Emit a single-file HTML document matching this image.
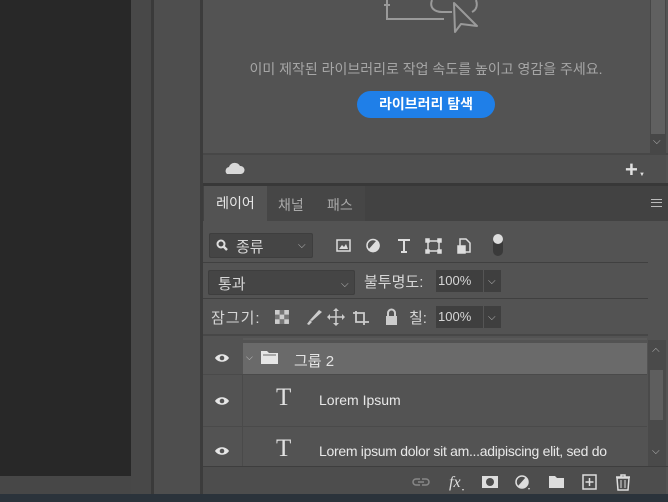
<!DOCTYPE html>
<html><head><meta charset="utf-8"><style>
*{margin:0;padding:0;box-sizing:border-box}
body{width:668px;height:502px;overflow:hidden;background:#535353;position:relative;font-family:"Liberation Sans","Noto Sans CJK KR",sans-serif;color:#d6d6d6}
.a{position:absolute}
.t{font-size:13px;white-space:nowrap}
.inp{background:#454545;border:1px solid #3e3e3e;border-radius:2px}
.dd{font-size:10px;color:#bbb}
</style></head><body>
<div class="a" style="left:0;top:0;width:131px;height:476px;background:#282828"></div>
<div class="a" style="left:0;top:476px;width:131px;height:18px;background:#474747"></div>
<div class="a" style="left:131px;top:0;width:20px;height:494px;background:#484848"></div>
<div class="a" style="left:151px;top:0;width:3px;height:494px;background:#3a3a3a"></div>
<div class="a" style="left:154px;top:0;width:46px;height:494px;background:#4e4e4e"></div>
<div class="a" style="left:200px;top:0;width:3px;height:494px;background:#3c3c3c"></div>
<div class="a" style="left:0;top:494px;width:668px;height:8px;background:#2b333b"></div>

<!-- library area -->
<div class="a" style="left:203px;top:0;width:465px;height:153px;background:#535353"></div>
<svg class="a" style="left:380px;top:0" width="102" height="34" viewBox="0 0 102 34" fill="none" stroke="#9a9a9a" stroke-width="2">
<path d="M7 0V4M4 5H10M7 5V19H64"/><path d="M52 0C49 8 55 12 62 12H72"/><path d="M96 0C98 6 96 10 92 12"/>
<path d="M74 3L75 32L81 24L97 26Z" stroke-linejoin="round"/></svg>
<div class="a t" style="left:203px;top:59px;width:446px;text-align:center;color:#a6a6a6;font-size:14px">이미 제작된 라이브러리로 작업 속도를 높이고 영감을 주세요.</div>
<div class="a" style="left:357px;top:91px;width:138px;height:27px;background:#1f7fe8;border-radius:14px;color:#fff;font-weight:bold;font-size:14px;text-align:center;line-height:27px">라이브러리 탐색</div>
<div class="a" style="left:650px;top:0;width:16px;height:153px;background:#474747"></div>
<div class="a" style="left:651px;top:0;width:14px;height:134px;background:#606060"></div>
<div class="a dd" style="left:653px;top:136px">⌵</div>
<div class="a" style="left:203px;top:153px;width:465px;height:2px;background:#474747"></div>
<div class="a" style="left:203px;top:155px;width:463px;height:28px;background:#4f4f4f"></div>
<svg class="a" style="left:223px;top:161px" width="22" height="14"><path d="M4 13H18A4 4 0 0 0 17 5A6 6 0 0 0 6 6A4 4 0 0 0 4 13Z" fill="#d8d8d8"/></svg>
<div class="a" style="left:625px;top:162px;font-size:22px;line-height:16px;color:#e0e0e0;font-weight:bold">+</div>
<div class="a" style="left:639px;top:172px;font-size:6px;color:#ddd">▼</div>
<div class="a" style="left:203px;top:183px;width:465px;height:3px;background:#383838"></div>

<!-- tabs -->
<div class="a" style="left:203px;top:186px;width:465px;height:35px;background:#424242"></div>
<div class="a t" style="left:204px;top:186px;width:63px;height:35px;background:#535353;line-height:35px;text-align:center;font-size:14px;color:#e8e8e8">레이어</div>
<div class="a t" style="left:267px;top:186px;width:98px;height:35px;background:#464646"></div>
<div class="a t" style="left:278px;top:195px;font-size:14px;color:#aaa">채널</div>
<div class="a t" style="left:327px;top:195px;font-size:14px;color:#aaa">패스</div>
<div class="a" style="left:651px;top:199px;width:11px;height:8px;border-top:1px solid #bbb;border-bottom:1px solid #bbb"><div style="margin-top:2px;border-top:1px solid #bbb"></div></div>

<!-- filter row -->
<div class="a inp" style="left:209px;top:233px;width:104px;height:25px"></div>
<svg class="a" style="left:216px;top:239px" width="12" height="13"><circle cx="5" cy="5" r="3.5" stroke="#ddd" stroke-width="2" fill="none"/><path d="M7.5 7.5L11 11" stroke="#ddd" stroke-width="2.5"/></svg>
<div class="a t" style="left:236px;top:236px;font-size:15px">종류</div>
<div class="a dd" style="left:298px;top:240px">⌵</div>
<svg class="a" style="left:336px;top:237px" width="170" height="20" fill="none" stroke="#ddd" stroke-width="1.5">
<rect x="1" y="3" width="13" height="11"/><path d="M3 12L6 8L8 10L10 7L12 12Z" fill="#ddd" stroke="none"/>
<circle cx="37" cy="8.5" r="6"/><path d="M33 13L41 4A6 6 0 0 1 33 13Z" fill="#ddd"/>
<path d="M62 3H74M68 3V15M65 15H71" stroke-width="2"/>
<rect x="92" y="4" width="11" height="10"/><rect x="90" y="2" width="3" height="3" fill="#ddd"/><rect x="102" y="2" width="3" height="3" fill="#ddd"/><rect x="90" y="13" width="3" height="3" fill="#ddd"/><rect x="102" y="13" width="3" height="3" fill="#ddd"/>
<path d="M124 2H130L134 6V15H124Z"/><rect x="122" y="9" width="7" height="7" fill="#ddd"/>
</svg>
<div class="a" style="left:493px;top:234px;width:10px;height:22px;border-radius:5px;background:#3a3a3a"></div>
<div class="a" style="left:493px;top:234px;width:10px;height:10px;border-radius:5px;background:#ddd"></div>
<div class="a" style="left:203px;top:262px;width:445px;height:1px;background:#404040"></div>

<!-- blend row -->
<div class="a inp" style="left:208px;top:270px;width:147px;height:25px"></div>
<div class="a t" style="left:218px;top:273px;font-size:15px">통과</div>
<div class="a dd" style="left:341px;top:279px">⌵</div>
<div class="a t" style="left:364px;top:271px;font-size:15px">불투명도:</div>
<div class="a" style="left:436px;top:270px;width:65px;height:22px;background:#3f3f3f"></div>
<div class="a t" style="left:438px;top:273px">100%</div>
<div class="a" style="left:483px;top:270px;width:1px;height:22px;background:#555"></div>
<div class="a dd" style="left:488px;top:276px">⌵</div>
<div class="a" style="left:203px;top:298px;width:445px;height:1px;background:#404040"></div>

<!-- lock row -->
<div class="a t" style="left:211px;top:307px;font-size:15px;letter-spacing:1px">잠그기:</div>
<svg class="a" style="left:274px;top:307px" width="150" height="20" fill="#ccc">
<rect x="1" y="3" width="14" height="14" fill="#777"/><rect x="1" y="3" width="4.6" height="4.6"/><rect x="10.3" y="3" width="4.6" height="4.6"/><rect x="5.6" y="7.6" width="4.6" height="4.6"/><rect x="1" y="12.3" width="4.6" height="4.6"/><rect x="10.3" y="12.3" width="4.6" height="4.6"/>
<path d="M45 3L48 5L38 14L36 13Z"/><path d="M36 13L38 15L35 18L33 17Z"/>
<path d="M62 2V18M54 10H70" stroke="#ccc" stroke-width="1.5"/><path d="M62 1L59 4H65ZM62 19L59 16H65ZM53 10L56 7V13ZM71 10L68 7V13Z"/>
<path d="M82 4V15H95M79 6H90V18" stroke="#ccc" stroke-width="1.8" fill="none"/>
<rect x="112" y="9" width="11" height="9"/><path d="M114 9V6A3.5 3.5 0 0 1 121 6V9" stroke="#ccc" stroke-width="2" fill="none"/>
</svg>
<div class="a t" style="left:409px;top:307px;font-size:15px">칠:</div>
<div class="a" style="left:436px;top:306px;width:65px;height:22px;background:#3f3f3f"></div>
<div class="a t" style="left:438px;top:309px">100%</div>
<div class="a" style="left:483px;top:306px;width:1px;height:22px;background:#555"></div>
<div class="a dd" style="left:488px;top:312px">⌵</div>
<div class="a" style="left:203px;top:334px;width:445px;height:2px;background:#474747"></div>
<div class="a" style="left:243px;top:338px;width:404px;height:2px;background:#5a5a5a"></div>

<!-- layers -->
<div class="a" style="left:203px;top:340px;width:40px;height:126px;background:#535353"></div>
<div class="a" style="left:243px;top:343px;width:404px;height:31px;background:#6a6a6a"></div>
<div class="a" style="left:203px;top:374px;width:444px;height:52px;background:#535353;border-top:1px solid #4a4a4a"></div>
<div class="a" style="left:203px;top:426px;width:444px;height:41px;background:#535353;border-top:1px solid #4a4a4a"></div>
<div class="a" style="left:242px;top:374px;width:1px;height:93px;background:#4a4a4a"></div>
<svg class="a" style="left:214px;top:352px" width="18" height="120" fill="#e6e6e6">
<g id="e"><path d="M1 6C4 1 12 1 15 6C12 11 4 11 1 6Z"/><circle cx="8" cy="6" r="2.3" fill="#535353"/></g>
<use href="#e" y="43"/><use href="#e" y="93"/></svg>
<div class="a" style="left:246px;top:352px;font-size:9px;color:#ccc">⌵</div>
<svg class="a" style="left:260px;top:349px" width="20" height="16"><path d="M1 2H7L9 4H18V15H1Z" fill="#e6e6e6"/><path d="M3 6H16" stroke="#6a6a6a"/></svg>
<div class="a t" style="left:294px;top:350px;font-size:15px;color:#e4e4e4">그룹 2</div>
<div class="a" style="left:276px;top:384px;font-family:'Liberation Serif',serif;font-size:25px;color:#e0e0e0">T</div>
<div class="a t" style="left:319px;top:392px;font-size:14px;color:#e8e8e8">Lorem Ipsum</div>
<div class="a" style="left:276px;top:435px;font-family:'Liberation Serif',serif;font-size:25px;color:#e0e0e0">T</div>
<div class="a t" style="left:319px;top:443px;font-size:14px;color:#e8e8e8;letter-spacing:-0.3px">Lorem ipsum dolor sit am...adipiscing elit, sed do</div>
<div class="a" style="left:648px;top:340px;width:18px;height:127px;background:#4a4a4a"></div>
<div class="a" style="left:650px;top:370px;width:13px;height:50px;background:#5e5e5e"></div>
<div class="a dd" style="left:652px;top:345px;transform:rotate(180deg)">⌵</div>
<div class="a dd" style="left:652px;top:446px">⌵</div>

<!-- bottom bar -->
<div class="a" style="left:203px;top:466px;width:465px;height:1px;background:#3e3e3e"></div>
<div class="a" style="left:203px;top:467px;width:463px;height:27px;background:#4d4d4d"></div>
<svg class="a" style="left:412px;top:473px" width="224" height="18" fill="#ddd">
<path d="M8 6H4A3 3 0 0 0 4 12H8M10 6H14A3 3 0 0 1 14 12H10M6 9H12" stroke="#888" stroke-width="1.5" fill="none"/>
<text x="37" y="14" font-family="Liberation Serif" font-style="italic" font-size="16" fill="#ddd">fx</text><path d="M50 16L52 16L51 18Z"/>
<rect x="70" y="3" width="16" height="12"/><circle cx="78" cy="9" r="4" fill="#4d4d4d"/>
<circle cx="110" cy="9" r="6" fill="none" stroke="#ddd" stroke-width="1.5"/><path d="M106 13L114 4A6 6 0 0 1 106 13Z"/><path d="M116 15L118 15L117 17Z"/>
<path d="M137 3H143L145 5H152V15H137Z"/>
<rect x="171" y="2" width="13" height="14" fill="none" stroke="#ddd" stroke-width="1.5"/><path d="M177.5 5V13M173.5 9H181.5" stroke="#ddd" stroke-width="1.5"/>
<path d="M204 4H218M209 4V2H213V4" stroke="#ddd" stroke-width="1.5" fill="none"/><path d="M205 5H217L216 17H206Z" fill="none" stroke="#ddd" stroke-width="1.5"/><path d="M209 7V15M213 7V15" stroke="#ddd"/>
</svg>
</body></html>
